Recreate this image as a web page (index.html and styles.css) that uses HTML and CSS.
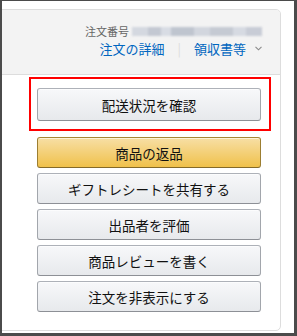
FILE: index.html
```html
<!DOCTYPE html>
<html lang="ja">
  <head>
    <meta charset="UTF-8" />
    <meta name="viewport" content="width=device-width, initial-scale=1.0" />
    <title>注文</title>
    <link rel="stylesheet" href="styles.css">
  </head>

  <body>
    <div class="frame">
      <div class="orderCard">
        <div class="orderHeader">
          <div class="orderNumber">
            <span class="orderLabel">注文番号</span>
            <span class="orderBlur"></span>
          </div>
          <div class="orderLinks">
            <a class="link" href="#">注文の詳細</a>
            <span class="divider">|</span>
            <a class="link" href="#">領収書等</a>
            <svg class="chevron" width="7" height="5" viewBox="0 0 7 5">
              <path d="M0.5 0.8 L3.5 3.8 L6.5 0.8" fill="none" stroke="#8a8a8a" stroke-width="1.1" />
            </svg>
          </div>
        </div>

        <div class="orderBody">
          <div class="highlight">
            <button class="btn">配送状況を確認</button>
          </div>
          <div class="actions">
            <button class="btn btnPrimary">商品の返品</button>
            <button class="btn">ギフトレシートを共有する</button>
            <button class="btn">出品者を評価</button>
            <button class="btn">商品レビューを書く</button>
            <button class="btn">注文を非表示にする</button>
          </div>
        </div>
      </div>
    </div>
  </body>
</html>
```

FILE: styles.css
```css
body {
  margin: 0;
  font-family: "Noto Sans CJK JP", "Noto Sans", sans-serif;
  background-color: #fff;
}

.frame {
  width: 297px;
  height: 336px;
  box-sizing: border-box;
  border-style: solid;
  border-color: #4b4b4b;
  border-width: 1px 3px 3px 2px;
  padding-top: 8px;
  background-color: #fff;
  overflow: hidden;
}

.orderCard {
  margin-left: -12px;
  width: 291px;
  height: 322px;
  box-sizing: border-box;
  border: 1px solid #dddddd;
  border-radius: 0 5px 5px 0;
  overflow: hidden;
}

.orderHeader {
  height: 65px;
  box-sizing: border-box;
  padding: 13px 18px 0 0;
  background-color: #f3f3f3;
  border-bottom: 1px solid #dddddd;
  text-align: right;
}

.orderNumber {
  display: flex;
  justify-content: flex-end;
  align-items: center;
  gap: 3px;
  height: 16px;
  font-size: 11px;
  color: #666;
}

.orderBlur {
  width: 130px;
  height: 9px;
  background: linear-gradient(
    to right,
    #d4d8e0 0 12%,
    #c3c8d2 12% 22%,
    #d8dce4 22% 30%,
    #bfc5cf 30% 48%,
    #d2d6de 48% 60%,
    #c5cad3 60% 78%,
    #d6dae2 78% 88%,
    #c8ccd6 88% 100%
  );
  filter: blur(1px);
}

.orderLinks {
  display: flex;
  justify-content: flex-end;
  align-items: center;
  height: 18px;
  font-size: 13px;
}

.link {
  color: #0066c0;
  text-decoration: none;
}

.divider {
  color: #dddddd;
  margin: 0 13px;
}

.chevron {
  margin-left: 9px;
}

.orderBody {
  padding: 2px 0 0 38px;
}

.highlight {
  width: 242px;
  height: 54px;
  box-sizing: border-box;
  border: 2px solid #ff0000;
  padding: 9px 0 0 6px;
}

.highlight .btn {
  height: 33px;
}

.actions {
  display: flex;
  flex-direction: column;
  gap: 5px;
  margin: 6px 0 0 8px;
}

.btn {
  display: block;
  width: 224px;
  height: 31px;
  padding: 0;
  font-family: "Noto Sans CJK JP", "Noto Sans", sans-serif;
  font-size: 13.5px;
  color: #111;
  text-align: center;
  background: linear-gradient(to bottom, #f7f8fa, #e7e9ec);
  border: 1px solid;
  border-color: #adb1b8 #a2a6ac #8d9096;
  border-radius: 3px;
  box-shadow: inset 0 1px 0 rgba(255, 255, 255, 0.6);
  cursor: pointer;
}

.btnPrimary {
  background: linear-gradient(to bottom, #f7dfa5, #f0c14b);
  border-color: #a88734 #9c7e31 #846a29;
}
```
